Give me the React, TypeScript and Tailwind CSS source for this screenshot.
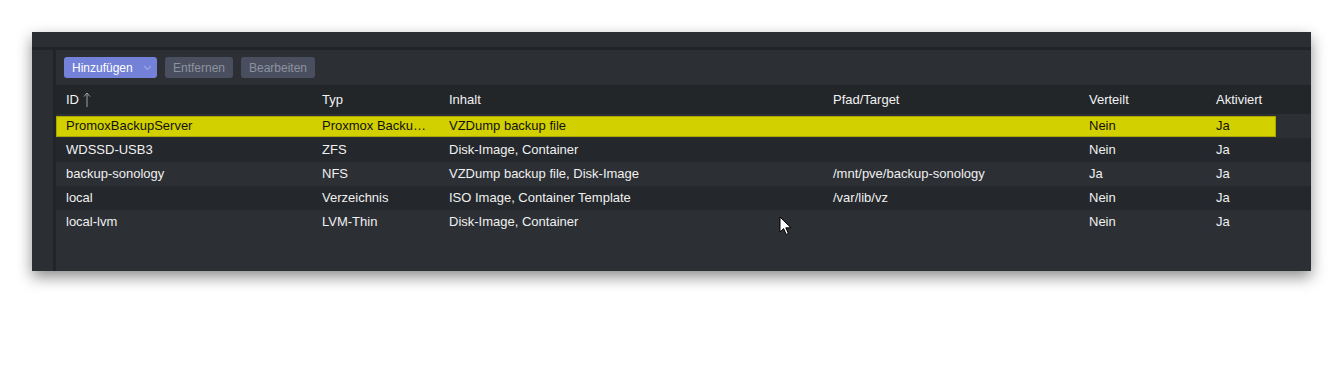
import React from 'react';

const columns = [
  { key: 'id', label: 'ID', width: 'w-[256px]' },
  { key: 'typ', label: 'Typ', width: 'w-[127px]' },
  { key: 'inhalt', label: 'Inhalt', width: 'w-[384px]' },
  { key: 'pfad', label: 'Pfad/Target', width: 'w-[256px]' },
  { key: 'verteilt', label: 'Verteilt', width: 'w-[127px]' },
  { key: 'aktiviert', label: 'Aktiviert', width: 'w-[70px]' },
];

const rows = [
  { id: 'PromoxBackupServer', typ: 'Proxmox Backu…', inhalt: 'VZDump backup file', pfad: '', verteilt: 'Nein', aktiviert: 'Ja' },
  { id: 'WDSSD-USB3', typ: 'ZFS', inhalt: 'Disk-Image, Container', pfad: '', verteilt: 'Nein', aktiviert: 'Ja' },
  { id: 'backup-sonology', typ: 'NFS', inhalt: 'VZDump backup file, Disk-Image', pfad: '/mnt/pve/backup-sonology', verteilt: 'Ja', aktiviert: 'Ja' },
  { id: 'local', typ: 'Verzeichnis', inhalt: 'ISO Image, Container Template', pfad: '/var/lib/vz', verteilt: 'Nein', aktiviert: 'Ja' },
  { id: 'local-lvm', typ: 'LVM-Thin', inhalt: 'Disk-Image, Container', pfad: '', verteilt: 'Nein', aktiviert: 'Ja' },
];

export default function App() {
  return (
    <div className="min-h-[384px] bg-white pt-[32px] pl-[32px] font-['Liberation_Sans',Arial,sans-serif]">
      <div className="relative w-[1279px] h-[239px] bg-[#2c2f34] shadow-[0_6px_14px_rgba(0,0,0,0.45)] flex flex-col overflow-hidden">
        {/* top band */}
        <div className="h-[15px] bg-[#2b2e33]" />
        <div className="h-[3px] bg-[#222528]" />

        <div className="flex flex-1">
          {/* left strip */}
          <div className="w-[24px] shrink-0 bg-[#2b2e33] border-r-[3px] border-[#222528]" />

          <div className="flex-1 flex flex-col">
            {/* toolbar */}
            <div className="h-[35px] flex items-start gap-[8px] pl-[8px] pt-[7px]">
              <button className="h-[21px] w-[93px] rounded-[3px] bg-[#7381d8] text-white text-[12px] flex items-center pl-[8px]">
                Hinzufügen
                <svg className="ml-[10px]" width="9" height="6" viewBox="0 0 9 6">
                  <path d="M1 1l3.5 3.5L8 1" fill="none" stroke="#9aa4e4" strokeWidth="1.2" />
                </svg>
              </button>
              <button className="h-[21px] w-[68px] rounded-[3px] bg-[#4a4f60] text-[#8d929d] text-[12px] flex items-center justify-center">
                Entfernen
              </button>
              <button className="h-[21px] w-[74px] rounded-[3px] bg-[#4a4f60] text-[#8d929d] text-[12px] flex items-center justify-center">
                Bearbeiten
              </button>
            </div>

            {/* header */}
            <div className="h-[29px] bg-[#232629] flex items-center text-[13px] text-[#f2f2f2]">
              {columns.map((c) => (
                <div key={c.key} className={`${c.width} pl-[10px] flex items-center`}>
                  {c.label}
                  {c.key === 'id' && (
                    <svg className="ml-[4px]" width="8" height="15" viewBox="0 0 8 15">
                      <path d="M4 1v14M1 4.5L4 1l3 3.5" fill="none" stroke="#9ca1a8" strokeWidth="1" />
                    </svg>
                  )}
                </div>
              ))}
            </div>

            {/* rows */}
            <div className="text-[13px]">
              {rows.map((r, i) => {
                const selected = i === 0;
                const stripe = i % 2 === 1 ? 'bg-[#24272b]' : 'bg-[#2c2f34]';
                return (
                  <div key={r.id} className={`h-[24px] flex items-center ${stripe}`}>
                    <div
                      className={`flex items-center ${
                        selected
                          ? 'h-[21px] bg-[#d3d000] shadow-[inset_0_0_0_1px_#a8a500] text-[#111]'
                          : 'h-[24px] text-[#f0f0f0]'
                      }`}
                    >
                      {columns.map((c) => (
                        <div key={c.key} className={`${c.width} pl-[10px] whitespace-nowrap`}>
                          {(r as any)[c.key]}
                        </div>
                      ))}
                    </div>
                  </div>
                );
              })}
            </div>
          </div>
        </div>

        {/* mouse pointer */}
        <svg className="absolute left-[747px] top-[184px]" width="14" height="20" viewBox="0 0 14 20">
          <path d="M1 1v15l3.6-3.4 2.6 5.8 2.2-1-2.6-5.6H12z" fill="#fff" stroke="#000" strokeWidth="1" />
        </svg>
      </div>
    </div>
  );
}
